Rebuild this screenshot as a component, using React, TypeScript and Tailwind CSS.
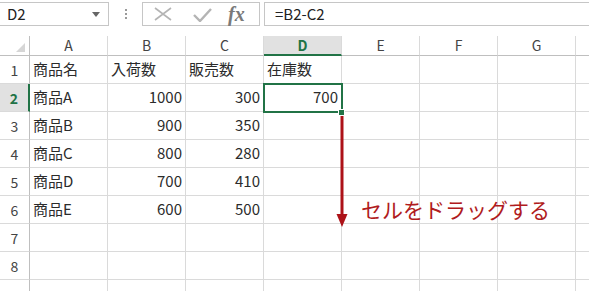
const FONT = 'font-["Noto_Sans_CJK_JP","Noto_Sans",sans-serif]';

const COLS = ['A', 'B', 'C', 'D', 'E', 'F', 'G'];

type Cell = { v: string; right?: boolean };

const DATA: Cell[][] = [
  [{ v: '商品名' }, { v: '入荷数' }, { v: '販売数' }, { v: '在庫数' }],
  [{ v: '商品A' }, { v: '1000', right: true }, { v: '300', right: true }, { v: '700', right: true }],
  [{ v: '商品B' }, { v: '900', right: true }, { v: '350', right: true }],
  [{ v: '商品C' }, { v: '800', right: true }, { v: '280', right: true }],
  [{ v: '商品D' }, { v: '700', right: true }, { v: '410', right: true }],
  [{ v: '商品E' }, { v: '600', right: true }, { v: '500', right: true }],
  [],
  [],
  [],
];

function FormulaBar() {
  return (
    <div className="flex h-[28px] items-start pt-[2px]">
      <div className="relative flex h-[24px] w-[109px] items-center border border-l-0 border-[#c6c6c6] pl-[7px] text-[15px] text-[#222]">
        D2
        <svg className="absolute right-[8px] top-[9px]" width="8" height="5" viewBox="0 0 8 5">
          <polygon points="0,0 8,0 4,5" fill="#666" />
        </svg>
      </div>
      <div className="flex h-[24px] w-[33px] flex-col items-center justify-center gap-[2px]">
        <span className="h-[2px] w-[2px] bg-[#9a9a9a]" />
        <span className="h-[2px] w-[2px] bg-[#9a9a9a]" />
        <span className="h-[2px] w-[2px] bg-[#9a9a9a]" />
      </div>
      <div className="flex h-[24px] w-[118px] items-center border border-[#c6c6c6]">
        <svg className="ml-[11px]" width="18" height="14" viewBox="0 0 18 14">
          <path d="M1 1 L17 13 M17 1 L1 13" stroke="#b4b4b4" strokeWidth="1.6" fill="none" />
        </svg>
        <svg className="ml-[21px] mt-[2px]" width="19" height="14" viewBox="0 0 19 14">
          <path d="M1 7 L7 13 L18 1" stroke="#b4b4b4" strokeWidth="2.4" fill="none" />
        </svg>
        <span className='ml-[16px] font-["Liberation_Serif",serif] text-[20px] font-bold italic leading-none text-[#7a7a7a]'>
          fx
        </span>
      </div>
      <div className="ml-[4px] flex h-[24px] flex-1 items-center border border-r-0 border-[#c6c6c6] pl-[10px] text-[15px] text-[#222]">
        =B2-C2
      </div>
    </div>
  );
}

function Sheet() {
  return (
    <div className="mt-[8px] grid grid-cols-[30px_repeat(7,78px)_1fr] grid-rows-[20px_repeat(9,28px)]">
      <div className="relative border-b border-r border-[#bfbfbf]">
        <svg className="absolute bottom-[3px] right-[4px]" width="9" height="9" viewBox="0 0 9 9">
          <polygon points="9,0 9,9 0,9" fill="#d6d6d6" />
        </svg>
      </div>
      {COLS.map((c) =>
        c === 'D' ? (
          <div
            key={c}
            className="flex items-center justify-center border-b-2 border-r border-b-[#217346] border-r-[#dadada] bg-[#e1e1e1] text-[14px] font-bold text-[#217346]"
          >
            {c}
          </div>
        ) : (
          <div
            key={c}
            className="flex items-center justify-center border-b border-r border-b-[#bfbfbf] border-r-[#dadada] text-[14px] text-[#444]"
          >
            {c}
          </div>
        )
      )}
      <div className="border-b border-[#bfbfbf]" />
      {DATA.map((row, r) => (
        <Row key={r} index={r + 1} cells={row} />
      ))}
    </div>
  );
}

function Row({ index, cells }: { index: number; cells: Cell[] }) {
  const active = index === 2;
  // row 9 is cut by the window edge: its number sits below the visible area
  const label = index < 9 ? index : '';
  return (
    <>
      {active ? (
        <div className="flex items-end justify-center border-b border-r-2 border-b-[#dadada] border-r-[#217346] bg-[#e1e1e1] pb-[2px] text-[14px] font-bold text-[#217346]">
          {label}
        </div>
      ) : (
        <div className="flex items-end justify-center border-b border-r border-b-[#dadada] border-r-[#bfbfbf] pb-[2px] text-[14px] text-[#444]">
          {label}
        </div>
      )}
      {COLS.map((c, i) => {
        const cell = cells[i];
        return (
          <div
            key={c}
            className={`flex items-center border-b border-r border-[#dadada] pb-[1px] text-[15px] text-[#2b2b2b] ${
              cell?.right ? 'justify-end pr-[3px]' : 'pl-[3px]'
            }`}
          >
            {cell?.v}
          </div>
        );
      })}
      <div className="border-b border-[#dadada]" />
    </>
  );
}

export default function App() {
  return (
    <div className={`relative h-[291px] w-[589px] overflow-hidden bg-white ${FONT}`}>
      <FormulaBar />
      <Sheet />
      {/* selection around D2 */}
      <div className="absolute left-[263px] top-[83px] h-[30px] w-[80px] border-2 border-[#217346]" />
      <div className="absolute left-[338px] top-[109px] h-[7px] w-[7px] border border-white bg-[#217346]" />
      {/* drag arrow */}
      <svg className="absolute left-[336px] top-[116px]" width="12" height="112" viewBox="0 0 12 112">
        <line x1="6" y1="0" x2="6" y2="100" stroke="#ad1218" strokeWidth="3" />
        <polygon points="0.5,98 11.5,98 6,111" fill="#ad1218" />
      </svg>
      <div className="absolute left-[361px] top-[194px] text-[21px] leading-[30px] text-[#b01b20]">
        セルをドラッグする
      </div>
    </div>
  );
}
